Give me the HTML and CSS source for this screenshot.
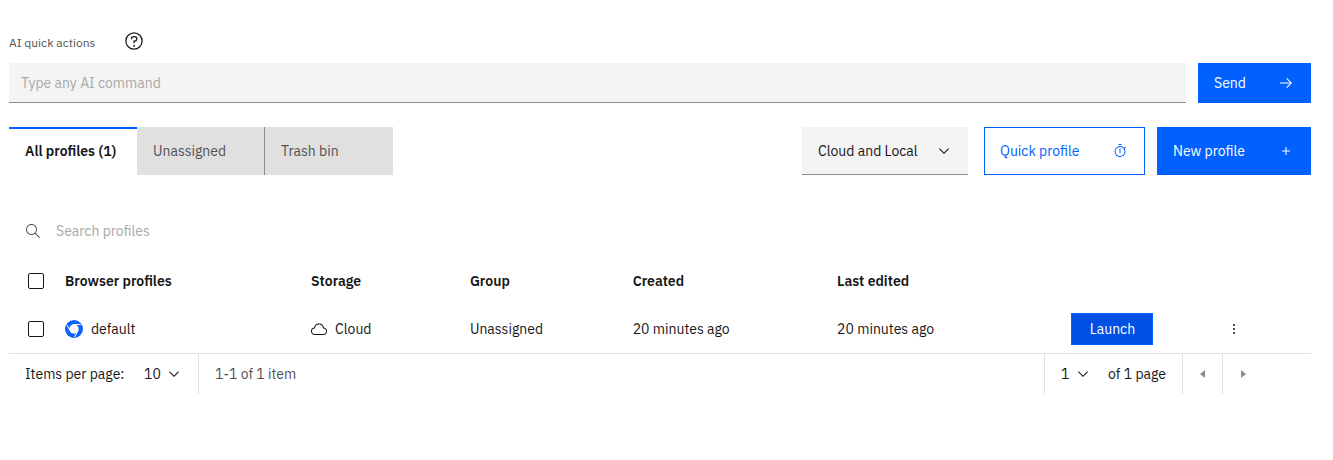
FILE: index.html
```html
<!DOCTYPE html>
<html lang="en">
<head>
<meta charset="utf-8">
<meta name="viewport" content="width=device-width, initial-scale=1">
<title>Browser profiles</title>
<link rel="stylesheet" href="styles.css">
</head>
<body>
<main class="page">
  <form class="ai">
    <div class="ai-head">
      <label class="ai-label" for="command">AI quick actions</label>
      <button class="icon-button" type="button" aria-label="Help">
        <svg class="icon-large" viewBox="0 0 32 32"><path d="M16 2a14 14 0 1 0 14 14A14 14 0 0 0 16 2Zm0 26a12 12 0 1 1 12-12 12 12 0 0 1-12 12Z"/><circle cx="16" cy="23.5" r="1.5"/><path d="M17 8h-1.500A4.490 4.490 0 0 0 11 12.500V13h2v-.5a2.500 2.500 0 0 1 2.500-2.500H17a2.500 2.500 0 0 1 0 5h-2v4.500h2V17a4.500 4.500 0 0 0 0-9Z"/></svg>
      </button>
    </div>
    <div class="ai-row">
      <input class="command" id="command" type="text" placeholder="Type any AI command">
      <button class="button button-send" type="button"><span>Send</span>
        <svg class="icon" viewBox="0 0 32 32"><path d="M18 6l-1.430 1.393L24.150 15H4v2h20.150l-7.580 7.573L18 26l10-10L18 6z"/></svg>
      </button>
    </div>
  </form>

  <div class="toolbar">
    <div class="tabs" role="tablist">
      <button class="tab tab-active" role="tab" aria-selected="true" type="button">All profiles (1)</button>
      <button class="tab tab-divided" role="tab" aria-selected="false" type="button">Unassigned</button>
      <button class="tab" role="tab" aria-selected="false" type="button">Trash bin</button>
    </div>
    <div class="actions">
      <div class="dropdown">
        <select class="dropdown-select" aria-label="Storage type"><option>Cloud and Local</option></select>
        <svg class="chevron" viewBox="0 0 16 16"><path d="M8 11 3 6l.7-.7L8 9.600l4.300-4.300.7.7z"/></svg>
      </div>
      <button class="button button-outline" type="button"><span>Quick profile</span>
        <svg class="icon" viewBox="0 0 32 32"><path d="M15 11h2v9h-2zM13 2h6v2h-6z"/><path d="M28 9l-1.420-1.410-2.250 2.250a10.940 10.940 0 1 0 1.180 1.650ZM16 26a9 9 0 1 1 9-9 9 9 0 0 1-9 9Z"/></svg>
      </button>
      <button class="button button-new" type="button"><span>New profile</span>
        <svg class="icon" viewBox="0 0 32 32"><path d="M17 15V8h-2v7H8v2h7v7h2v-7h7v-2z"/></svg>
      </button>
    </div>
  </div>

  <div class="search">
    <svg class="icon" viewBox="0 0 16 16"><path d="M15 14.300 10.700 10c1.900-2.300 1.600-5.800-.7-7.700S4.200.7 2.300 3 .7 8.800 3 10.700c2 1.700 5 1.700 7 0l4.300 4.300.7-.7zM2 6.500C2 4 4 2 6.500 2S11 4 11 6.500 9 11 6.500 11 2 9 2 6.500z"/></svg>
    <input class="search-input" type="search" aria-label="Search profiles" placeholder="Search profiles">
  </div>

  <table class="table">
    <colgroup>
      <col class="col-check"><col class="col-name"><col class="col-storage"><col class="col-group"><col class="col-created"><col class="col-edited"><col class="col-launch"><col>
    </colgroup>
    <thead>
      <tr>
        <th class="check-cell"><input class="checkbox" type="checkbox" aria-label="Select all profiles"></th>
        <th>Browser profiles</th><th>Storage</th><th>Group</th><th>Created</th><th>Last edited</th><th></th><th></th>
      </tr>
    </thead>
    <tbody>
      <tr>
        <td class="check-cell"><input class="checkbox" type="checkbox" aria-label="Select default"></td>
        <td><div class="with-icon">
          <svg class="browser-icon" viewBox="0 0 18 18"><circle class="browser-disc" cx="9" cy="9" r="9"/><circle class="browser-core" cx="9" cy="9" r="4.700"/><path class="browser-lines" d="M8.500 4.600h7.200M13 10.500 9.600 17M5.300 11 1.900 5"/></svg>
          <span>default</span></div></td>
        <td><div class="with-icon">
          <svg class="icon" viewBox="0 0 32 32"><path d="M16 7h0a7.660 7.660 0 0 1 1.510.15 8 8 0 0 1 6.350 6.340l.26 1.350 1.350.24A5.500 5.500 0 0 1 24.500 26H7.500a5.500 5.500 0 0 1-1-10.920l1.340-.24.26-1.350A8 8 0 0 1 16 7m0-2a10 10 0 0 0-9.830 8.120A7.500 7.500 0 0 0 7.490 28h17a7.500 7.500 0 0 0 1.320-14.880 10 10 0 0 0-7.940-7.940A10.270 10.270 0 0 0 16 5Z"/></svg>
          <span>Cloud</span></div></td>
        <td>Unassigned</td><td>20 minutes ago</td><td>20 minutes ago</td>
        <td><button class="launch" type="button">Launch</button></td>
        <td><button class="icon-button" type="button" aria-label="More options">
          <svg class="icon" viewBox="0 0 32 32"><circle cx="16" cy="8" r="2"/><circle cx="16" cy="16" r="2"/><circle cx="16" cy="24" r="2"/></svg>
        </button></td>
      </tr>
    </tbody>
  </table>

  <nav class="pagination" aria-label="Pagination">
    <div class="page-size">
      <label for="size">Items per page:</label>
      <div class="picker picker-size">
        <select class="picker-select" id="size"><option>10</option></select>
        <svg class="chevron" viewBox="0 0 16 16"><path d="M8 11 3 6l.7-.7L8 9.600l4.300-4.300.7.7z"/></svg>
      </div>
    </div>
    <span class="range">1-1 of 1 item</span>
    <div class="page-number">
      <div class="picker">
        <select class="picker-select" id="number" aria-label="Page number"><option>1</option></select>
        <svg class="chevron" viewBox="0 0 16 16"><path d="M8 11 3 6l.7-.7L8 9.600l4.300-4.300.7.7z"/></svg>
      </div>
      <label for="number">of 1 page</label>
    </div>
    <button class="step" type="button" aria-label="Previous page" disabled><svg class="icon" viewBox="0 0 32 32"><path d="M20 24 10 16 20 8z"/></svg></button>
    <button class="step" type="button" aria-label="Next page" disabled><svg class="icon" viewBox="0 0 32 32"><path d="M12 8l10 8-10 8z"/></svg></button>
  </nav>
</main>
</body>
</html>
```
FILE: styles.css
```css
* {
  box-sizing: border-box;
}

body {
  margin: 0;
  background: #fff;
  color: #161616;
  font-family: "IBM Plex Sans", Inter, "Liberation Sans", sans-serif;
  font-size: 14px;
  line-height: 18px;
}

button,
input,
select {
  margin: 0;
  border: 0;
  border-radius: 0;
  padding: 0;
  background: none;
  color: inherit;
  font: inherit;
}

svg {
  display: block;
  flex: none;
  fill: currentColor;
}

.page {
  padding: 30px 22px 0 9px;
}

.icon,
.chevron {
  width: 16px;
  height: 16px;
}

.icon-large {
  width: 20px;
  height: 20px;
}

.icon-button {
  display: block;
}

/* AI command bar */
.ai-head {
  display: flex;
  align-items: center;
  gap: 29px;
  height: 22px;
  margin-bottom: 11px;
}

.ai-label {
  padding-top: 4px;
  color: #525252;
  font-size: 12px;
}

.ai-row {
  display: flex;
  gap: 12px;
}

.command {
  flex: 1;
  min-width: 0;
  height: 40px;
  padding: 0 12px;
  border-bottom: 1px solid #8d8d8d;
  background: #f4f4f4;
}

.command::placeholder,
.search-input::placeholder {
  color: #a8a8a8;
  opacity: 1;
}

.button {
  display: flex;
  align-items: center;
  justify-content: space-between;
  height: 48px;
  padding: 0 16px 0 15px;
  border: 1px solid #0061fe;
  background: #0061fe;
  color: #fff;
}

.button-send {
  width: 113px;
  height: 40px;
}

.button-outline {
  width: 161px;
  margin-left: 4px;
  background: #fff;
  color: #0061fe;
}

.button-new {
  width: 154px;
}

/* Tabs and actions */
.toolbar {
  display: flex;
  justify-content: space-between;
  margin-top: 24px;
}

.tabs,
.actions {
  display: flex;
}

.actions {
  gap: 12px;
}

.tab {
  width: 128px;
  height: 48px;
  padding: 0 16px;
  background: #e0e0e0;
  color: #525252;
  text-align: left;
  white-space: nowrap;
}

.tab-divided {
  border-right: 1px solid #8d8d8d;
}

.tab-active {
  background: #fff;
  box-shadow: inset 0 2px #0061fe;
  color: #161616;
  font-weight: 600;
}

.dropdown,
.picker {
  display: grid;
  align-items: center;
}

.dropdown > *,
.picker > * {
  grid-area: 1 / 1;
}

.dropdown {
  width: 166px;
}

.chevron {
  justify-self: end;
  pointer-events: none;
}

.dropdown .chevron {
  margin-right: 16px;
}

.dropdown-select,
.picker-select {
  appearance: none;
  width: 100%;
}

.dropdown-select {
  height: 48px;
  padding: 0 40px 0 16px;
  border-bottom: 1px solid #8d8d8d;
  background: #f4f4f4;
}

/* Search */
.search {
  display: flex;
  align-items: center;
  gap: 15px;
  height: 48px;
  margin-top: 32px;
  margin-bottom: 2px;
  padding: 0 16px;
  color: #525252;
}

.search-input {
  flex: 1;
  height: 32px;
}

/* Table */
.table {
  width: 100%;
  border-collapse: collapse;
  table-layout: fixed;
}

.col-check {
  width: 56px;
}

.col-name {
  width: 18.9%;
}

.col-storage {
  width: 12.2%;
}

.col-group {
  width: 12.5%;
}

.col-created {
  width: 15.7%;
}

.col-edited {
  width: 18%;
}

.col-launch {
  width: 11.9%;
}

.table th,
.table td {
  height: 48px;
  padding: 0;
  text-align: left;
  vertical-align: middle;
}

.table th {
  font-weight: 600;
}

.table .check-cell {
  padding-left: 19px;
}

.checkbox {
  display: block;
  appearance: none;
  width: 16px;
  height: 16px;
  border: 1px solid #161616;
  border-radius: 2px;
}

.checkbox:checked {
  background: #161616;
}

.with-icon {
  display: flex;
  align-items: center;
  gap: 8px;
}

.browser-icon {
  width: 18px;
  height: 18px;
}

.browser-disc {
  fill: #0f62fe;
}

.browser-core {
  fill: #fff;
}

.browser-lines {
  fill: none;
  stroke: #fff;
}

.launch {
  display: block;
  width: 82px;
  height: 32px;
  border: 1px solid #0061fe;
  background: #0050e6;
  color: #fff;
}

/* Pagination */
.pagination {
  display: flex;
  height: 41px;
  padding-right: 49px;
  border-top: 1px solid #e0e0e0;
}

.page-size,
.page-number {
  display: flex;
  align-items: center;
  justify-content: space-between;
  padding: 0 16px;
}

.page-size {
  width: 190px;
  border-right: 1px solid #e0e0e0;
}

.picker {
  width: 30px;
}

.picker-size {
  width: 38px;
}

.range {
  align-self: center;
  padding-left: 16px;
  color: #525252;
}

.page-number {
  width: 138px;
  margin-left: auto;
  border-left: 1px solid #e0e0e0;
}

.step {
  display: grid;
  place-items: center;
  width: 40px;
  border-left: 1px solid #e0e0e0;
  color: #8d8d8d;
}
```
